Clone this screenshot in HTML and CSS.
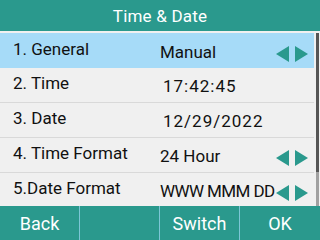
FILE: index.html
```html
<!DOCTYPE html>
<html lang="en">
<head>
    <meta charset="UTF-8">
    <title>Time &amp; Date</title>
    <link rel="stylesheet" href="styles.css">
</head>
<body>
    <div class="screen">
        <div class="title-bar">Time &amp; Date</div>
        <div class="content">
            <div class="list">
                <div class="row selected">
                    <span class="label">1. General</span>
                    <span class="value">Manual</span>
                    <span class="arrows"><i class="arrow-left"></i><i class="arrow-right"></i></span>
                </div>
                <div class="row">
                    <span class="label">2. Time</span>
                    <span class="value digits">17:42:45</span>
                </div>
                <div class="row">
                    <span class="label">3. Date</span>
                    <span class="value digits">12/29/2022</span>
                </div>
                <div class="row">
                    <span class="label">4. Time Format</span>
                    <span class="value">24 Hour</span>
                    <span class="arrows"><i class="arrow-left"></i><i class="arrow-right"></i></span>
                </div>
                <div class="row last">
                    <span class="label">5.Date Format</span>
                    <span class="value tight">WWW MMM DD</span>
                    <span class="arrows"><i class="arrow-left"></i><i class="arrow-right"></i></span>
                </div>
            </div>
            <div class="scrollbar">
                <div class="thumb"></div>
            </div>
        </div>
        <div class="softkeys">
            <div class="key">Back</div>
            <div class="key"></div>
            <div class="key">Switch</div>
            <div class="key">OK</div>
        </div>
    </div>
</body>
</html>
```

FILE: styles.css
```css
body {
    margin: 0;
    padding: 0;
    font-family: Roboto, "Liberation Sans", sans-serif;
    background-color: #f0f0f0;
}

.screen {
    width: 320px;
    height: 240px;
    display: flex;
    flex-direction: column;
    overflow: hidden;
}

.title-bar {
    height: 31px;
    background-color: #2a998d;
    color: white;
    font-size: 17px;
    letter-spacing: 0.2px;
    display: flex;
    justify-content: center;
    align-items: center;
    flex-shrink: 0;
}

.content {
    margin-top: 2px;
    height: 173px;
    display: flex;
}

.list {
    width: 314px;
}

.row {
    height: 34px;
    border-bottom: 1px solid #d9d9d9;
    display: flex;
    align-items: center;
    color: #111;
    font-size: 17px;
    white-space: nowrap;
}

.row.selected {
    height: 35px;
    border-bottom: none;
    background-color: #a6dbf8;
}

.row.last {
    height: 33px;
    border-bottom: none;
}

.label {
    width: 147px;
    padding-left: 13px;
    margin-top: -4px;
}

.value {
    flex: 1;
    margin-top: 2px;
}

.value.digits {
    padding-left: 3px;
    letter-spacing: 1px;
}

.value.tight {
    letter-spacing: -0.6px;
}

.arrows {
    display: flex;
    gap: 6px;
    margin-right: 6px;
    margin-top: 6px;
}

.arrow-left,
.arrow-right {
    width: 0;
    height: 0;
    border-top: 8px solid transparent;
    border-bottom: 8px solid transparent;
}

.arrow-left {
    border-right: 13px solid #2a998d;
}

.arrow-right {
    border-left: 13px solid #2a998d;
}

.scrollbar {
    width: 3px;
    margin-left: 2px;
    background-color: #a0a0a0;
}

.thumb {
    height: 139px;
    background-color: #555;
}

.softkeys {
    height: 34px;
    background-color: #2a998d;
    display: flex;
    flex-shrink: 0;
}

.key {
    width: 79px;
    border-right: 1px solid #7cc6d6;
    color: white;
    font-size: 18px;
    display: flex;
    justify-content: center;
    align-items: center;
}

.key:last-child {
    width: 80px;
    border-right: none;
}
```
